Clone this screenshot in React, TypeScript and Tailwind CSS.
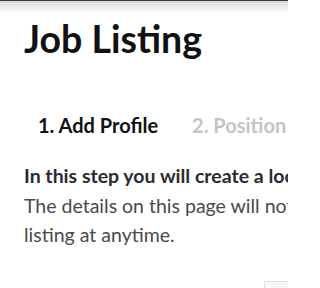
export default function App() {
  return (
    <div className="relative w-[288px] h-[288px] overflow-hidden bg-white font-['Lato',sans-serif]">
      {/* header shadow */}
      <div className="h-px bg-[#3a3a3a]" />
      <div className="h-[12px] bg-gradient-to-b from-[#d9d9d9] to-white" />

      <div className="pl-6">
        <h1 className="mt-[4px] text-[37.5px] leading-[44px] font-bold text-[#111] whitespace-nowrap">
          Job Listing
        </h1>

        <div className="mt-[52px] flex gap-[34px] pl-[14px] whitespace-nowrap text-[20px] leading-[24px] font-bold">
          <span className="text-[#111]">1. Add Profile</span>
          <span className="text-[#c4c4c4]">2. Position</span>
        </div>

        <div className="mt-[24px] text-[19.5px] leading-[29.5px] whitespace-nowrap">
          <p className="font-bold text-[#2a2a33]">In this step you will create a location profile.</p>
          <p className="text-[#4a4a4a]">
            The details on this page will not be shown. You can edit this
            <br />
            listing at anytime.
          </p>
        </div>
      </div>

      <div className="absolute left-[264px] top-[281px] w-[24px] h-[7px] border-t border-l border-[#e0e0e0] bg-[#f7f7f7]" />
    </div>
  );
}
